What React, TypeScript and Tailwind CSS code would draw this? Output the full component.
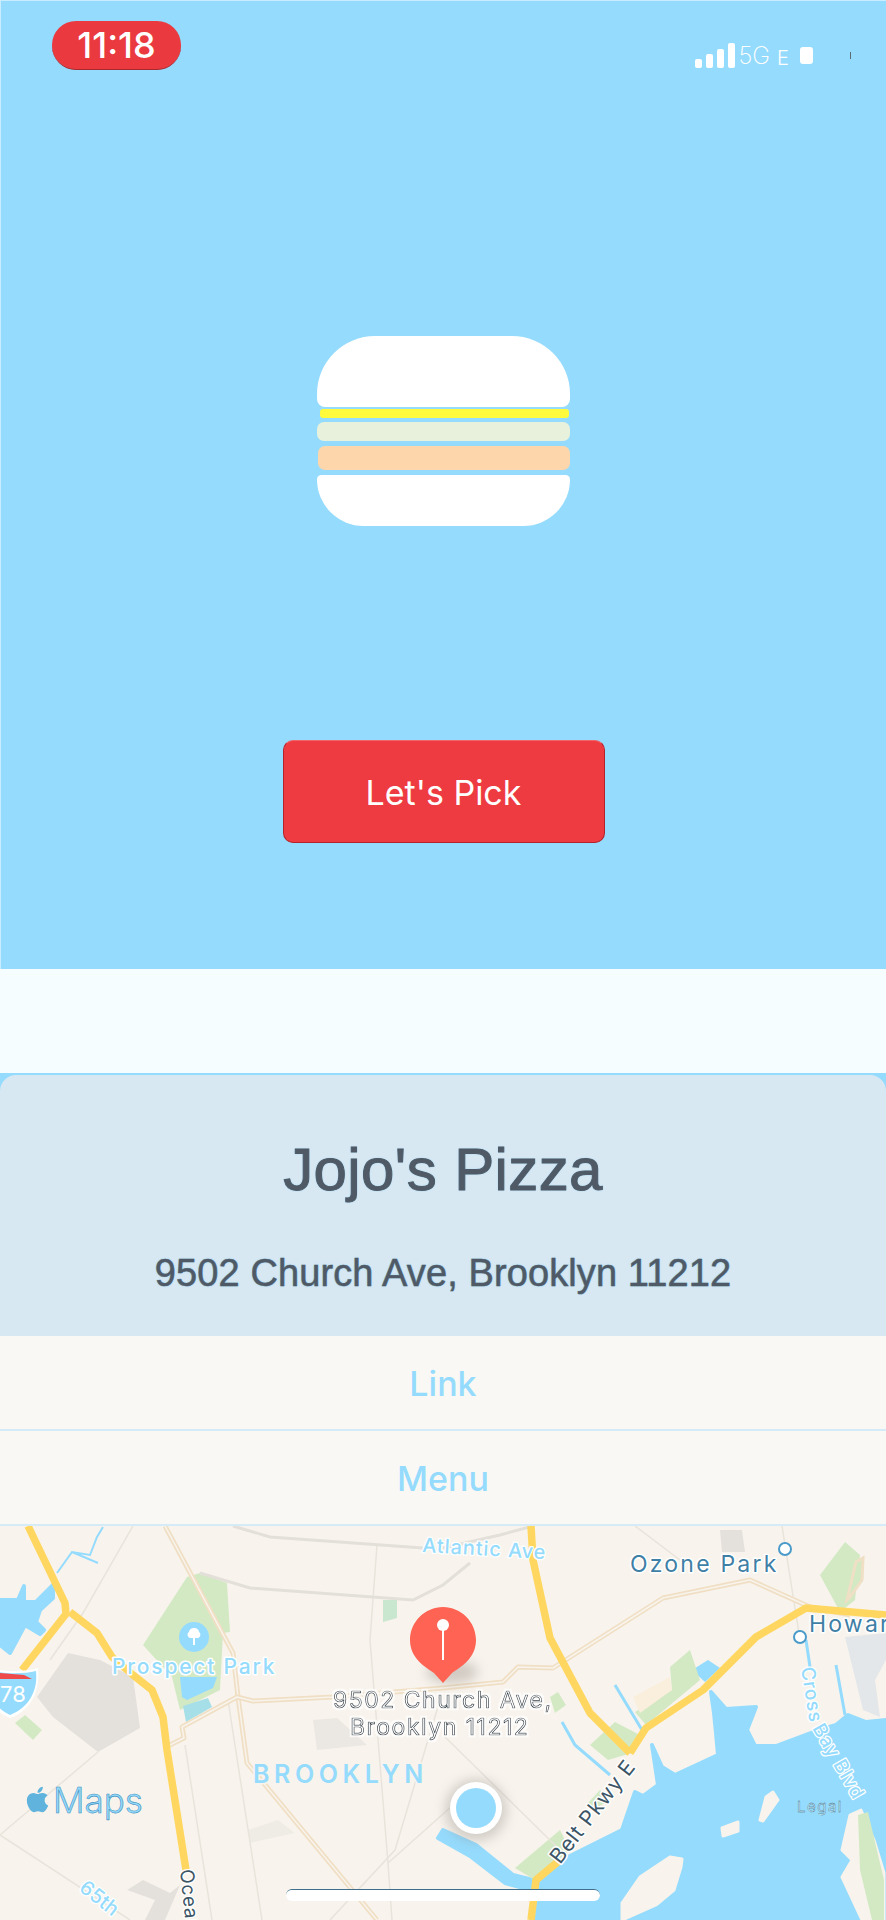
import { FaApple } from "react-icons/fa";

const water = "#95dbfd";
const land = "#f8f4ed";

const creamRoads = [
  "M165 1526L187 1567L233 1653L238 1697L247 1763L377 1920",
  "M170 1745L184 1738L182 1727L237 1697L253 1701L333 1697L443 1688L503 1682L518 1667L553 1668L663 1598L750 1580L810 1607L850 1615",
];

const greyRoads = [
  "M233 1526L270 1537L423 1548",
  "M200 1573L250 1588L413 1600L443 1585L470 1563",
  "M443 1548L500 1535L533 1526",
];

const thinRoads = [
  "M133 1526L83 1613L50 1660",
  "M377 1545L370 1640L388 1863L392 1920",
  "M185 1745L212 1920",
  "M228 1700L262 1920",
  "M0 1835L98 1752",
  "M0 1835L130 1920",
  "M440 1700L395 1850L330 1920",
  "M443 1735L560 1850",
  "M388 1863L470 1790",
  "M782 1526L800 1640",
  "M635 1526L680 1560",
];

function Map() {
  return (
    <div className="relative h-[394px] w-full overflow-hidden bg-[#f8f4ed]">
      <svg viewBox="0 1526 886 394" width="886" height="394" className="block">
        <defs>
          <filter id="soft" x="-60%" y="-60%" width="220%" height="220%">
            <feGaussianBlur stdDeviation="6" />
          </filter>
          <filter id="halo" x="-5%" y="-20%" width="110%" height="140%">
            <feMorphology in="SourceAlpha" operator="dilate" radius="2" result="grown" />
            <feFlood floodColor="#ffffff" floodOpacity="0.75" />
            <feComposite in2="grown" operator="in" />
            <feMerge>
              <feMergeNode />
              <feMergeNode in="SourceGraphic" />
            </feMerge>
          </filter>
        </defs>

        {/* water */}
        <g stroke={water} strokeWidth="4" strokeLinejoin="round">
          <path
            fill={water}
            d="M652 1745L662 1767L675 1775L718 1755L716 1733L714 1713L711 1692L726 1709L756 1707L747 1730L755 1746L776 1746L816 1731L836 1725L848 1715L866 1722L886 1720V1920H531L535 1880L562 1860L622 1830L635 1792L643 1796L658 1785Z"
          />
          <path fill={water} d="M443 1830L476 1845L513 1875L533 1880L531 1890L505 1883L470 1856L438 1838Z" />
          <path fill={water} d="M0 1600L18 1600L24 1586L24 1602L36 1602L53 1585L53 1598L40 1610L36 1622L44 1630L40 1634L25 1625L10 1653L0 1645Z" />
        </g>
        <path fill="none" stroke={water} strokeWidth="2" d="M57 1573L72 1552L90 1555L97 1537L103 1527M72 1552L98 1563" />
        <path fill="none" stroke={water} strokeWidth="3" d="M615 1685L642 1730M562 1722L575 1745L610 1775M836 1665L845 1715M806 1640L810 1667" />
        <path fill={water} d="M692 1670L708 1660L720 1668L705 1682Z" />

        {/* land on the water */}
        <g stroke={land} strokeWidth="3" strokeLinejoin="round">
          <path fill={land} d="M682 1859L681 1867L674 1890L656 1905L622 1920L622 1903L640 1877L670 1857Z" />
          <path fill={land} d="M773 1792L778 1800L763 1821L760 1820L766 1797Z" />
          <path fill={land} d="M738 1822L738 1831L723 1836L722 1828Z" />
          <path fill={land} d="M850 1815L861 1810L874 1840L884 1873V1920H862L842 1877L852 1860L842 1850Z" />
        </g>
        <path fill="#e3e7ea" d="M845 1637L886 1633V1660L875 1680L880 1717L863 1710Z" />
        <path fill="#d3e9c4" d="M858 1815L868 1812L884 1880V1920H872L860 1870Z" />

        {/* parks */}
        <path fill="#d3e9c4" d="M187 1577L143 1645L172 1677L180 1710L220 1690L223 1633L230 1632L227 1583L200 1573Z" />
        <path fill={water} d="M180 1677L217 1677L213 1688L187 1700L182 1697Z" />
        <path fill="#a6dfe8" d="M183 1706L208 1698L212 1707L186 1722Z" />
        <path fill="#d3e9c4" d="M15 1723L25 1715L42 1730L33 1740Z" />
        <path fill="#c9e6cf" d="M383 1600L397 1600L397 1618L383 1622Z" />
        <path fill="#d3e9c4" d="M550 1697L558 1692L566 1705L555 1713Z" />
        <path fill="#d3e9c4" d="M590 1745L615 1722L640 1735L635 1752L608 1760Z" />
        <path fill="#d3e9c4" d="M670 1667L690 1650L700 1680L646 1725L635 1712L672 1690Z" />
        <path fill="#faeedd" d="M633 1697L670 1677L672 1690L640 1713Z" />
        <path fill="#d3e9c4" d="M588 1803L600 1790L610 1800L593 1810Z" />
        <path fill="#d3e9c4" d="M515 1868L560 1830L570 1850L535 1880Z" />
        <path fill="#d3e9c4" d="M820 1575L845 1542L860 1555L855 1600L840 1612Z" />
        <path fill="#d3e9c4" stroke="#efdfc5" strokeWidth="3" d="M847 1600L856 1562L863 1558L862 1580L850 1597Z" />

        {/* city blocks */}
        <path fill="#e4e0dc" d="M37 1697L68 1653L100 1660L133 1677L140 1728L98 1752L53 1717Z" />
        <path fill="#ebe7e2" d="M313 1720L337 1718L367 1745L317 1750Z" />
        <path fill="#efece6" d="M248 1830L278 1820L295 1833L250 1843Z" />
        <path fill="#e4e0dc" d="M127 1890L143 1880L170 1893L180 1885L165 1920H145L155 1900Z" />
        <path fill="#e4e0dc" d="M720 1530L742 1530L745 1552L722 1552Z" />

        {/* roads */}
        {thinRoads.map((d) => (
          <path key={d} d={d} fill="none" stroke="#e8e4dc" strokeWidth="1.5" />
        ))}
        {greyRoads.map((d) => (
          <path key={d} d={d} fill="none" stroke="#e3dfd9" strokeWidth="3" />
        ))}
        {creamRoads.map((d) => (
          <g key={d} fill="none" strokeLinejoin="round">
            <path d={d} stroke="#f0dfc4" strokeWidth="5" />
            <path d={d} stroke="#f8f4ed" strokeWidth="1.5" />
          </g>
        ))}
        <g fill="none" stroke="#ffd760" strokeWidth="7.5" strokeLinejoin="round">
          <path d="M28 1526L65 1603L66 1614L22 1670" />
          <path d="M70 1612L97 1633L112 1657L133 1675L152 1690L163 1717L167 1750L186 1870" />
          <path d="M531 1526L533 1560L550 1638L590 1713L630 1753" />
          <path d="M630 1753L646 1728L703 1690L756 1637L806 1608L886 1615" />
          <path d="M560 1860L536 1880L531 1920" />
        </g>

        {/* park icon */}
        <circle cx="194" cy="1637" r="15" fill={water} />
        <path fill="#fff" d="M194 1628c-3 0-5 2-5 4-2 1-2 5 1 6h3v7h2v-7h3c3-1 3-5 1-6 0-2-2-4-5-4z" />

        {/* I-78 shield */}
        <path fill="#fff" d="M-8 1668C4 1672 26 1672 38 1668C40 1690 32 1710 10 1718C-10 1710-18 1690-8 1668Z" />
        <path fill={water} d="M-6 1671C6 1674 24 1674 36 1671C38 1690 30 1707 10 1715C-8 1707-14 1690-6 1671Z" />
        <path fill="#ef4a4a" d="M0 1673L24 1675L32 1679H0Z" />
        <text x="0" y="1702" fontSize="22" fill="#fff" fontFamily="Inter, sans-serif">78</text>

        {/* labels */}
        <g fontFamily="Inter, sans-serif" strokeLinejoin="round">
          <text x="112" y="1674" fontSize="21" letterSpacing="1.8" fontWeight="500" fill={water} stroke="#fff" strokeWidth="3" paintOrder="stroke">Prospect Park</text>
          <text x="253" y="1783" fontSize="25" letterSpacing="4.6" fontWeight="600" fill={water} stroke={land} strokeWidth="3" paintOrder="stroke">BROOKLYN</text>
          <text x="422" y="1552" fontSize="20" fontWeight="500" letterSpacing="0.9" fill={water} stroke="#fff" strokeWidth="2.5" paintOrder="stroke" transform="rotate(3.3 422 1552)">Atlantic Ave</text>
          <text x="630" y="1572" fontSize="23" letterSpacing="2.2" fill="#3f7fa6" stroke="#fff" strokeWidth="3" paintOrder="stroke">Ozone Park</text>
          <text x="809" y="1632" fontSize="23" letterSpacing="2.2" fill="#3f7fa6" stroke="#fff" strokeWidth="3" paintOrder="stroke">Howard</text>
          <path id="cross-bay" fill="none" d="M801 1668L810 1725L862 1815" />
          <text fontSize="19" fontWeight="500" letterSpacing="0.6" fill={water} stroke="#fff" strokeWidth="2.5" paintOrder="stroke">
            <textPath href="#cross-bay">Cross Bay Blvd</textPath>
          </text>
          <text x="560" y="1865" fontSize="21" letterSpacing="0.7" fill="#3c5566" stroke="#fff" strokeWidth="3" paintOrder="stroke" transform="rotate(-52 560 1865)">Belt Pkwy E</text>
          <text x="180" y="1870" fontSize="19" letterSpacing="0.6" fill="#3c5566" stroke="#fff" strokeWidth="2.5" paintOrder="stroke" transform="rotate(84 180 1870)">Ocean</text>
          <text x="78" y="1890" fontSize="20" fontWeight="500" fill={water} stroke="#fff" strokeWidth="2.5" paintOrder="stroke" transform="rotate(38 78 1890)">65th</text>
          <g filter="url(#halo)">
            <text x="333" y="1708" fontSize="23" letterSpacing="1.5" fill="#fff" stroke="#2f3b44" strokeWidth="0.7">9502 Church Ave,</text>
            <text x="350" y="1735" fontSize="23" letterSpacing="1.5" fill="#fff" stroke="#2f3b44" strokeWidth="0.7">Brooklyn 11212</text>
          </g>
          <text x="53" y="1813" fontSize="35" fontWeight="300" fill={water} stroke="#3f8fbd" strokeWidth="0.6">Maps</text>
          <text x="797" y="1812" fontSize="15" letterSpacing="1.5" fill="#b8e6fb" stroke="#3c5566" strokeWidth="0.3">Legal</text>
        </g>
        <FaApple x={23} y={1785} size={29} color="#5fb3dd" />

        {/* transit dots */}
        <circle cx="785" cy="1549" r="6" fill="#fff" stroke="#4a9bc9" strokeWidth="2" />
        <circle cx="800" cy="1637" r="6" fill="#fff" stroke="#4a9bc9" strokeWidth="2" />

        {/* pin */}
        <ellipse cx="452" cy="1672" rx="26" ry="12" fill="#8a7f78" opacity="0.35" filter="url(#soft)" />
        <path fill="#ff6353" d="M443 1607C425 1607 410 1622 410 1640C410 1658 425 1667 434 1673L443 1683L452 1673C461 1667 476 1658 476 1640C476 1622 461 1607 443 1607Z" />
        <rect x="442" y="1626" width="2" height="34" fill="#fff" />
        <circle cx="443" cy="1625" r="6" fill="#fff" />

        {/* user location */}
        <circle cx="476" cy="1810" r="31" fill="#8a8580" opacity="0.35" filter="url(#soft)" />
        <circle cx="476" cy="1808" r="26" fill="#fff" />
        <circle cx="476" cy="1808" r="20" fill={water} />
      </svg>

      {/* home indicator */}
      <div className="absolute bottom-[19px] left-[286px] h-[12px] w-[314px] rounded-[6px] border-t border-[#3f6f8c] bg-white" />
    </div>
  );
}

function StatusIcons() {
  return (
    <div className="flex items-end text-white">
      <div className="flex items-end gap-[4px]">
        <div className="h-[9px] w-[7px] rounded-[2px] bg-white" />
        <div className="h-[14px] w-[7px] rounded-[2px] bg-white" />
        <div className="h-[19px] w-[7px] rounded-[2px] bg-white" />
        <div className="h-[25px] w-[7px] rounded-[2px] bg-white" />
      </div>
      <span className="ml-[3px] text-[24px] leading-[24px] font-extralight [font-family:Inter,sans-serif]">5G</span>
      <span className="ml-[7px] text-[20px] leading-[20px] font-light [font-family:Inter,sans-serif]">E</span>
      <div className="mb-[4px] ml-[11px] h-[17px] w-[13px] rounded-[3px] bg-white" />
      <div className="mb-[9px] ml-[37px] h-[7px] w-px bg-[#5b6b76]" />
    </div>
  );
}

function Burger() {
  return (
    <div className="flex w-[253px] flex-col">
      <div className="h-[71px] rounded-t-[58px] rounded-b-[8px] bg-white" />
      <div className="mt-[2px] ml-[3px] h-[9px] w-[249px] rounded-[3px] bg-[#fffb3c]" />
      <div className="mt-[4px] h-[19px] rounded-[7px] bg-[#e8f1dc]" />
      <div className="mt-[5px] ml-[1px] h-[24px] rounded-[7px] bg-[#fdd6ac]" />
      <div className="mt-[5px] h-[51px] rounded-t-[5px] rounded-b-[52px] bg-white" />
    </div>
  );
}

export default function App() {
  return (
    <div className="flex h-[1920px] w-[886px] flex-col overflow-hidden bg-white [font-family:Inter,sans-serif]">
      <section className="flex h-[969px] flex-col items-center border-t border-l border-[#c9edfe] bg-[#95dbfd]">
        <div className="flex h-[69px] w-full items-end justify-between pr-[35px] pl-[51px]">
          <div className="flex h-[49px] w-[129px] items-center justify-center rounded-[24px] border-b border-[#a8282e] bg-[#ea3a3f] text-[36px] font-medium text-white">
            11:18
          </div>
          <div className="mb-[2px]">
            <StatusIcons />
          </div>
        </div>
        <div className="mt-[266px]">
          <Burger />
        </div>
        <button className="mt-[214px] h-[103px] w-[322px] rounded-[10px] border border-[#b5242c] border-t-[#f0646a] bg-[#ee3a41] pt-[2px] text-[34px] text-white">
          Let's Pick
        </button>
      </section>

      <div className="h-[104px] bg-[#f5fdff]" />

      <div className="bg-[#95dbfd] pt-[2px]">
        <div className="flex h-[261px] flex-col items-center rounded-t-[16px] bg-[#d7e8f3] [font-family:'Liberation_Sans',sans-serif] text-[#4f5a66]">
          <h1 className="mt-[64px] text-[60px] leading-[62px] tracking-[0.4px] [-webkit-text-stroke:1px_#4f5a66] [text-shadow:0_0_2px_#7cc8ee]">Jojo's Pizza</h1>
          <p className="mt-[52px] text-[38px] leading-[40px] tracking-[0.1px] [-webkit-text-stroke:0.5px_#4f5a66] [text-shadow:0_0_2px_#7cc8ee]">9502 Church Ave, Brooklyn 11212</p>
        </div>
      </div>

      <div className="flex h-[93px] items-center justify-center bg-[#faf8f5] pt-[2px] text-[34px] font-medium text-[#95dbfd]">Link</div>
      <div className="h-[2px] bg-[#d5ebf7]" />
      <div className="flex h-[93px] items-center justify-center bg-[#faf8f5] pt-[2px] text-[34px] font-medium text-[#95dbfd]">Menu</div>
      <div className="h-[2px] bg-[#d5ebf7]" />

      <Map />
    </div>
  );
}
